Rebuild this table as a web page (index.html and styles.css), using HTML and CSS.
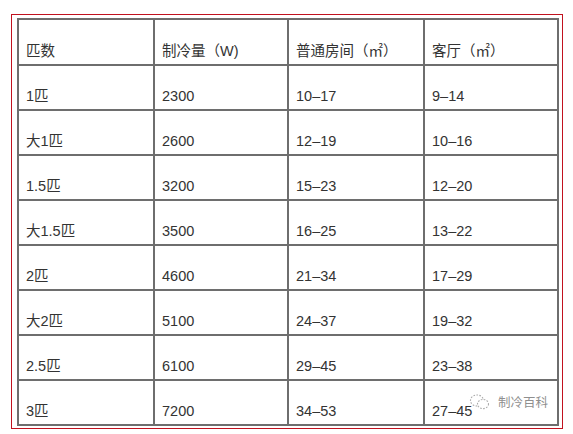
FILE: index.html
```html
<!DOCTYPE html>
<html lang="zh">
<head>
<meta charset="utf-8">
<link rel="stylesheet" href="styles.css">
</head>
<body>
<div class="frame">
  <table class="grid">
    <colgroup><col class="c1"><col class="c2"><col class="c3"><col class="c4"></colgroup>
    <tr class="head"><td>匹数</td><td>制冷量（W)</td><td>普通房间（㎡）</td><td>客厅（㎡）</td></tr>
    <tr><td>1匹</td><td>2300</td><td>10–17</td><td>9–14</td></tr>
    <tr><td>大1匹</td><td>2600</td><td>12–19</td><td>10–16</td></tr>
    <tr><td>1.5匹</td><td>3200</td><td>15–23</td><td>12–20</td></tr>
    <tr><td>大1.5匹</td><td>3500</td><td>16–25</td><td>13–22</td></tr>
    <tr><td>2匹</td><td>4600</td><td>21–34</td><td>17–29</td></tr>
    <tr><td>大2匹</td><td>5100</td><td>24–37</td><td>19–32</td></tr>
    <tr><td>2.5匹</td><td>6100</td><td>29–45</td><td>23–38</td></tr>
    <tr><td>3匹</td><td>7200</td><td>34–53</td><td>27–45</td></tr>
  </table>
  <div class="mark">
    <svg class="mark-icon" width="22" height="18" viewBox="0 0 22 18">
      <ellipse cx="8" cy="7.5" rx="6.5" ry="5.5" fill="none" stroke="#aaa" stroke-width="1.1" stroke-dasharray="1.6 1.4"/>
      <ellipse cx="14" cy="11" rx="5.5" ry="4.6" fill="#fff" stroke="#aaa" stroke-width="1.1" stroke-dasharray="1.6 1.4"/>
    </svg>
    <span class="mark-text">制冷百科</span>
  </div>
</div>
</body>
</html>
```
FILE: styles.css
```css
html, body {
  margin: 0;
  padding: 0;
  background: #fff;
}
body {
  width: 573px;
  height: 434px;
  overflow: hidden;
  font-family: "Liberation Sans", "Noto Sans CJK SC", sans-serif;
}
.frame {
  position: relative;
  margin: 14px 0 0 11px;
  width: 545px;
  height: 410px;
  border: 1.5px solid #c1121f;
  padding: 3px 0 0 5px;
  box-sizing: content-box;
}
.grid {
  border-collapse: collapse;
  table-layout: fixed;
  width: 540px;
  color: #333;
  font-size: 14.5px;
}
.c1 { width: 136px; }
.c2 { width: 134px; }
.c3 { width: 136px; }
.c4 { width: 134px; }
.grid td {
  border: 2px solid #6e6e6e;
  height: 45px;
  box-sizing: border-box;
  vertical-align: bottom;
  padding: 0 6px 3px 7px;
  line-height: 20px;
  white-space: nowrap;
}
.grid .head td {
  height: 46px;
}
.mark {
  position: absolute;
  left: 457px;
  top: 377px;
  display: flex;
  align-items: center;
  gap: 7px;
}
.mark-icon {
  display: block;
}
.mark-text {
  font-family: "Noto Sans CJK SC", sans-serif;
  font-size: 12.5px;
  color: #8f8f8f;
}
```
